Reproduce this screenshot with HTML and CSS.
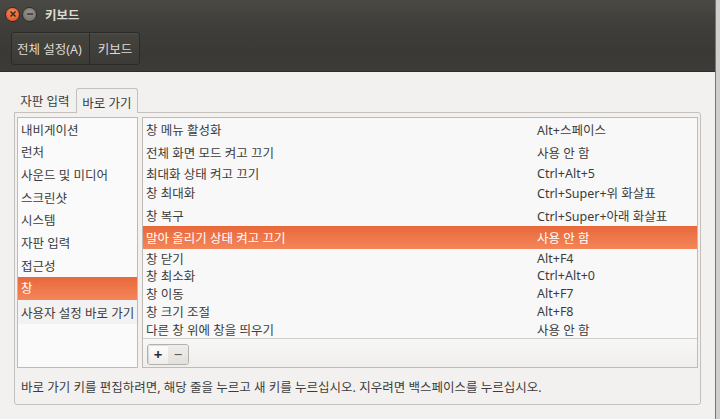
FILE: index.html
```html
<!DOCTYPE html>
<html lang="ko">
<head>
    <meta charset="UTF-8">
    <title>키보드</title>
    <link rel="stylesheet" href="styles.css">
</head>
<body>

<div class="window">
    <div class="titlebar">
        <span class="wbtn close">
            <svg width="8" height="8" viewBox="0 0 8 8"><path d="M1.5 1.5 L6.5 6.5 M6.5 1.5 L1.5 6.5" stroke="#3a2a22" stroke-width="1.6"/></svg>
        </span>
        <span class="wbtn minimize">
            <svg width="8" height="8" viewBox="0 0 8 8"><path d="M1 4 H7" stroke="#3c3b37" stroke-width="1.6"/></svg>
        </span>
        <span class="title">키보드</span>
    </div>

    <div class="toolbar">
        <div class="crumbs">
            <span class="crumb">전체 설정(A)</span>
            <span class="crumb">키보드</span>
        </div>
    </div>

    <div class="content">
        <div class="tabs">
            <span class="tab">자판 입력</span>
            <span class="tab active">바로 가기</span>
        </div>

        <div class="frame">
            <div class="panes">
                <ul class="cats">
                    <li>내비게이션</li>
                    <li>런처</li>
                    <li>사운드 및 미디어</li>
                    <li>스크린샷</li>
                    <li>시스템</li>
                    <li>자판 입력</li>
                    <li>접근성</li>
                    <li class="selected">창</li>
                    <li class="custom">사용자 설정 바로 가기</li>
                </ul>

                <div class="shortcuts">
                    <div class="rows">
                        <div class="row h23"><span class="name">창 메뉴 활성화</span><span class="accel">Alt+스페이스</span></div>
                        <div class="row h23"><span class="name">전체 화면 모드 켜고 끄기</span><span class="accel">사용 안 함</span></div>
                        <div class="row h19"><span class="name">최대화 상태 켜고 끄기</span><span class="accel">Ctrl+Alt+5</span></div>
                        <div class="row h18"><span class="name">창 최대화</span><span class="accel">Ctrl+Super+위 화살표</span></div>
                        <div class="row h25"><span class="name">창 복구</span><span class="accel">Ctrl+Super+아래 화살표</span></div>
                        <div class="row h23 selected"><span class="name">말아 올리기 상태 켜고 끄기</span><span class="accel">사용 안 함</span></div>
                        <div class="row h18"><span class="name">창 닫기</span><span class="accel">Alt+F4</span></div>
                        <div class="row h17"><span class="name">창 최소화</span><span class="accel">Ctrl+Alt+0</span></div>
                        <div class="row h18"><span class="name">창 이동</span><span class="accel">Alt+F7</span></div>
                        <div class="row h18"><span class="name">창 크기 조절</span><span class="accel">Alt+F8</span></div>
                        <div class="row h18"><span class="name">다른 창 위에 창을 띄우기</span><span class="accel">사용 안 함</span></div>
                    </div>
                    <div class="editbar">
                        <div class="addremove">
                            <span class="add">+</span>
                            <span class="remove">−</span>
                        </div>
                    </div>
                </div>
            </div>

            <p class="hint">바로 가기 키를 편집하려면, 해당 줄을 누르고 새 키를 누르십시오. 지우려면 백스페이스를 누르십시오.</p>
        </div>
    </div>
</div>

</body>
</html>
```

FILE: styles.css
```css
body {
    margin: 0;
    background-color: #cfcfcd;
    font-family: "Noto Sans", "Noto Sans CJK KR", sans-serif;
    font-size: 12.5px;
    color: #3c3c3c;
    overflow: hidden;
}
.window {
    width: 715px;
    height: 419px;
    border-right: 1px solid #77766f;
    background: #f2f1f0;
    display: flex;
    flex-direction: column;
}

/* title bar */
.titlebar {
    height: 25px;
    background: linear-gradient(#4a4944, #3f3e3a);
    display: flex;
    align-items: center;
    padding: 3px 0 0 5px;
    box-sizing: border-box;
}
.wbtn {
    width: 15px;
    height: 15px;
    border-radius: 50%;
    display: flex;
    align-items: center;
    justify-content: center;
    margin-right: 2px;
    box-sizing: border-box;
    border: 1px solid #2e2d2a;
}
.close {
    background: radial-gradient(circle at 50% 35%, #f88a5c, #de4d1c);
}
.minimize {
    background: radial-gradient(circle at 50% 35%, #96958f, #6c6b66);
}
.title {
    margin-left: 6px;
    color: #dfdbd2;
    font-weight: bold;
    font-size: 12.5px;
}

/* toolbar */
.toolbar {
    height: 47px;
    background: linear-gradient(#3f3e3a, #3a3935 60%, #3c3b37);
    padding: 7px 0 0 11px;
    box-sizing: border-box;
    border-bottom: 1px solid #2f2e2b;
}
.crumbs {
    display: inline-flex;
    height: 33px;
    border: 1px solid #2b2a27;
    border-radius: 3px;
    background: linear-gradient(#45443f, #3b3a36);
    box-shadow: inset 0 1px 0 rgba(255,255,255,0.06);
    box-sizing: border-box;
}
.crumb {
    display: flex;
    align-items: center;
    padding: 0 7px 0 5px;
    color: #dfdbd2;
}
.crumb + .crumb {
    border-left: 1px solid #2b2a27;
    padding: 0 7px 0 8px;
}

/* content */
.content {
    flex: 1;
    padding: 15px 14px 0 14px;
}
.tabs {
    display: flex;
    height: 25px;
}
.tab {
    width: 62px;
    display: flex;
    align-items: center;
    justify-content: center;
    padding-top: 2px;
    box-sizing: border-box;
}
.tab.active {
    border: 1px solid #c4c1bc;
    border-bottom: none;
    border-radius: 3px 3px 0 0;
    background: #f2f1f0;
    position: relative;
    top: 1px;
}
.frame {
    border: 1px solid #c4c1bc;
    border-radius: 0 3px 3px 3px;
    height: 293px;
    box-sizing: border-box;
    padding: 4px 2px 0 2px;
}
.panes {
    display: flex;
    gap: 4px;
    height: 251px;
}

/* category list */
.cats {
    list-style: none;
    margin: 0;
    padding: 0;
    width: 121px;
    box-sizing: border-box;
    border: 1px solid #bebbb6;
    background: #fafafa;
}
.cats li {
    height: 22.7px;
    line-height: 20px;
    padding: 2.5px 0 0 3px;
    box-sizing: border-box;
    white-space: nowrap;
}
.cats li.custom {
    height: 24px;
    padding-top: 4px;
    background: #f2f2f2;
}
.selected {
    background: linear-gradient(#e9683a, #f3865a);
    color: #ffffff;
}

/* shortcut list */
.shortcuts {
    flex: 1;
    border: 1px solid #bebbb6;
    display: flex;
    flex-direction: column;
}
.rows {
    background: #f8f8f8;
    border-bottom: 1px solid #cfcdc9;
}
.row {
    display: flex;
    align-items: center;
    padding-left: 3px;
    white-space: nowrap;
}
.row .name {
    width: 391px;
}
.h17 { height: 17px; }
.h18 { height: 18px; }
.h19 { height: 19px; }
.h23 { height: 23px; }
.h25 { height: 25px; padding-top: 4px; box-sizing: border-box; }
.editbar {
    flex: 1;
    background: linear-gradient(#f7f7f6, #efeeed);
    padding: 5px 0 0 4px;
}
.addremove {
    display: inline-flex;
    height: 19px;
    border: 1px solid #b4b1ac;
    border-radius: 3px;
    overflow: hidden;
}
.addremove span {
    width: 20px;
    display: flex;
    align-items: center;
    justify-content: center;
    font-size: 15px;
    line-height: 1;
}
.add {
    background: linear-gradient(#fdfdfd, #eeedec);
    color: #2d2d2d;
    font-weight: bold;
    box-shadow: inset 1px 1px 1px rgba(0,0,0,0.12);
}
.remove {
    background: linear-gradient(#efeeec, #e2e0dd);
    color: #5c5c5c;
}

.hint {
    margin: 0;
    padding: 10px 0 0 4px;
    line-height: 20px;
}
```
